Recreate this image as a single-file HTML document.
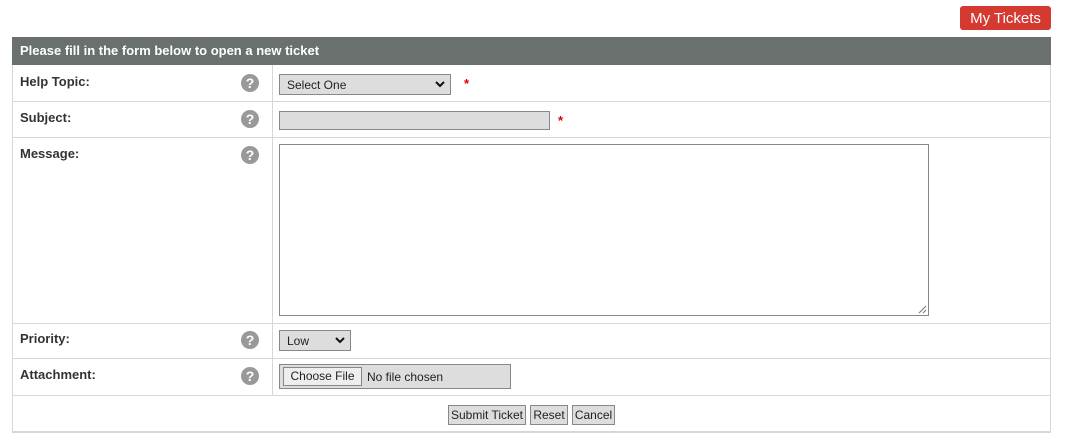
<!DOCTYPE html>
<html><head><style>
body{margin:0;width:1080px;height:448px;background:#fff;font-family:"Liberation Sans",sans-serif;position:relative;overflow:hidden}
.a{position:absolute}
.btn{background:#d43a2f;color:#fff;border-radius:3px;font-size:15px;text-align:center;line-height:25px}
.hd{background:#6a706e;color:#fff;font-weight:bold;font-size:13px;line-height:28px;padding-left:8px;box-sizing:border-box}
.hl{background:#d6d6d6;height:1px}
.vl{background:#d6d6d6;width:1px}
.lb{font-weight:bold;font-size:13px;color:#333;left:20px}
.q{width:18px;height:18px;border-radius:50%;background:#999;color:#fff;font-weight:bold;font-size:14px;line-height:18px;text-align:center;left:241px}
.st{color:#d00;font-size:13px;font-weight:bold}
.inp{background:#ddd;border:1px solid #888;box-sizing:border-box;font-size:12px;color:#222}
.b{background:#ddd;border:1px solid #888;box-sizing:border-box;font-size:12px;line-height:18px;text-align:center;color:#222}
svg.c{position:absolute;right:5px;top:6px}
</style></head><body>
<div class="a btn" style="left:960px;top:6px;width:91px;height:24px">My Tickets</div>
<div class="a hd" style="left:12px;top:37px;width:1039px;height:28px">Please fill in the form below to open a new ticket</div>
<div class="a vl" style="left:12px;top:65px;height:367px"></div>
<div class="a vl" style="left:1050px;top:65px;height:367px"></div>
<div class="a vl" style="left:272px;top:65px;height:330px"></div>
<div class="a hl" style="left:12px;top:101px;width:1039px"></div>
<div class="a hl" style="left:12px;top:137px;width:1039px"></div>
<div class="a hl" style="left:12px;top:323px;width:1039px"></div>
<div class="a hl" style="left:12px;top:358px;width:1039px"></div>
<div class="a hl" style="left:12px;top:395px;width:1039px"></div>
<div class="a hl" style="left:12px;top:431px;width:1039px;height:2px"></div>

<div class="a lb" style="top:74px">Help Topic:</div>
<div class="a q" style="top:74px">?</div>
<div class="a inp" style="left:279px;top:74px;width:172px;height:21px;padding:3px 7px">Select One<svg class="c" width="10" height="7" viewBox="0 0 10 7"><path d="M1 1L5 5L9 1" stroke="#111" stroke-width="2" fill="none"/></svg></div>
<div class="a st" style="left:464px;top:76px">*</div>

<div class="a lb" style="top:110px">Subject:</div>
<div class="a q" style="top:110px">?</div>
<div class="a inp" style="left:279px;top:111px;width:271px;height:19px"></div>
<div class="a st" style="left:558px;top:113px">*</div>

<div class="a lb" style="top:146px">Message:</div>
<div class="a q" style="top:146px">?</div>
<div class="a" style="left:279px;top:144px;width:650px;height:172px;border:1px solid #888;box-sizing:border-box;background:#fff"><svg style="position:absolute;right:1px;bottom:1px" width="9" height="9" viewBox="0 0 9 9"><path d="M8 1L1 8M8 5L5 8" stroke="#777" stroke-width="1"/></svg></div>

<div class="a lb" style="top:331px">Priority:</div>
<div class="a q" style="top:331px">?</div>
<div class="a inp" style="left:279px;top:330px;width:72px;height:21px;padding:3px 7px">Low<svg class="c" width="10" height="7" viewBox="0 0 10 7"><path d="M1 1L5 5L9 1" stroke="#111" stroke-width="2" fill="none"/></svg></div>

<div class="a lb" style="top:367px">Attachment:</div>
<div class="a q" style="top:367px">?</div>
<div class="a inp" style="left:279px;top:364px;width:232px;height:25px"></div>
<div class="a b" style="left:283px;top:367px;width:79px;height:19px;line-height:17px;background:#eee">Choose File</div>
<div class="a" style="left:367px;top:370px;font-size:12px;color:#222">No file chosen</div>

<div class="a b" style="left:448px;top:405px;width:78px;height:20px">Submit Ticket</div>
<div class="a b" style="left:530px;top:405px;width:38px;height:20px">Reset</div>
<div class="a b" style="left:572px;top:405px;width:43px;height:20px">Cancel</div>
</body></html>
